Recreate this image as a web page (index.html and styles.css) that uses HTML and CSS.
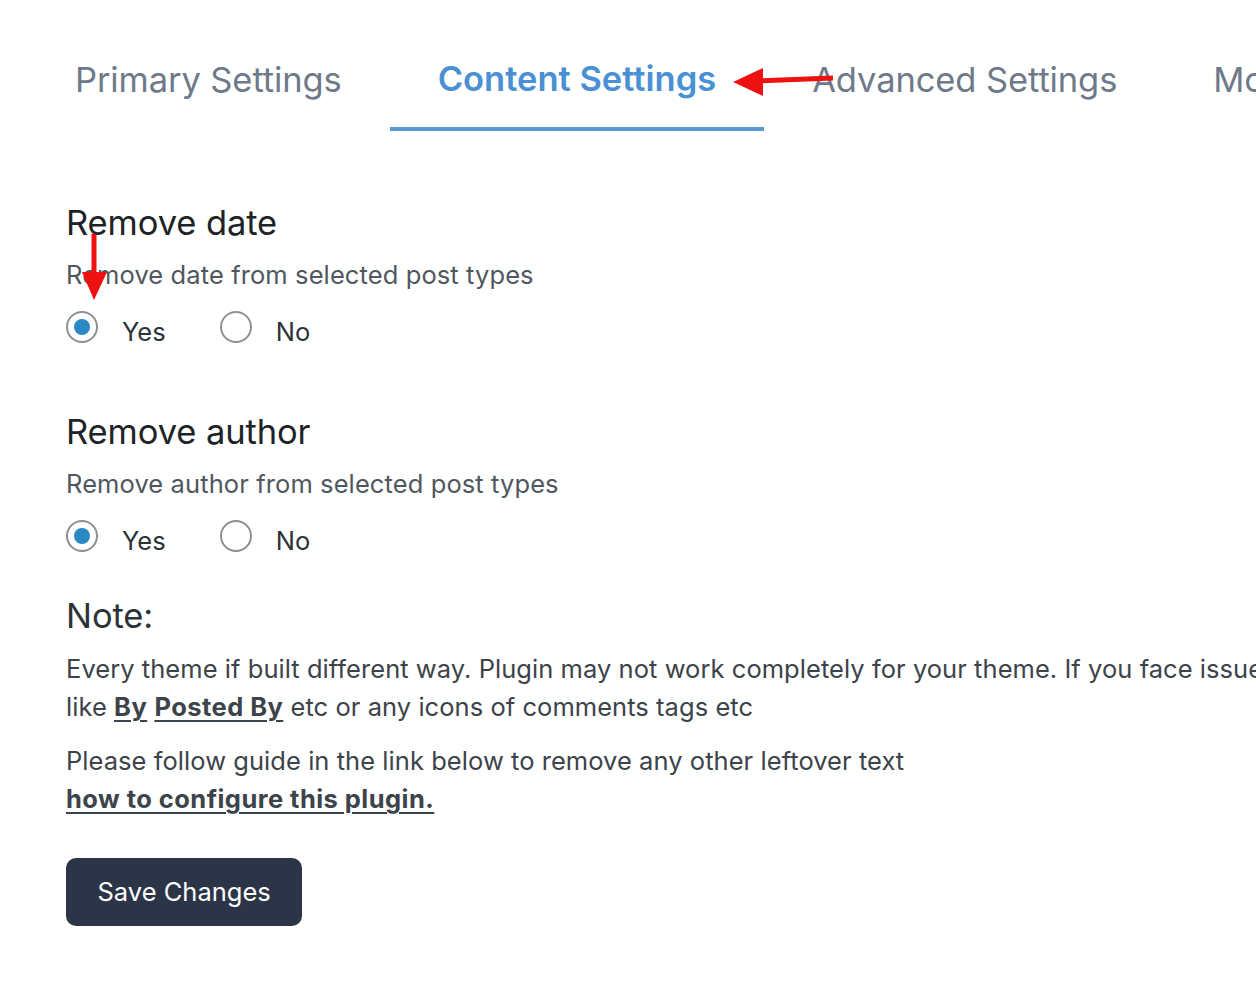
FILE: index.html
```html
<!DOCTYPE html>
<html lang="en">
<head>
<meta charset="utf-8">
<title>Content Settings</title>
<link rel="stylesheet" href="styles.css">
</head>
<body>
<div class="page">
  <nav class="tabs">
    <a class="tab">Primary Settings</a>
    <a class="tab active">Content Settings</a>
    <a class="tab">Advanced Settings</a>
    <a class="tab">More Settings</a>
  </nav>

  <main class="content">
    <section class="field first">
      <h2 class="field-title">Remove date</h2>
      <p class="field-desc">Remove date from selected post types</p>
      <div class="radios">
        <label class="radio"><span class="dot checked"></span><span class="radio-text">Yes</span></label>
        <label class="radio"><span class="dot"></span><span class="radio-text">No</span></label>
      </div>
    </section>

    <section class="field second">
      <h2 class="field-title">Remove author</h2>
      <p class="field-desc">Remove author from selected post types</p>
      <div class="radios">
        <label class="radio"><span class="dot checked"></span><span class="radio-text">Yes</span></label>
        <label class="radio"><span class="dot"></span><span class="radio-text">No</span></label>
      </div>
    </section>

    <section class="note">
      <h2 class="field-title">Note:</h2>
      <p class="note-text">Every theme if built different way. Plugin may not work completely for your theme. If you face issues<br>like <a class="strong-link">By</a> <a class="strong-link">Posted By</a> etc or any icons of comments tags etc</p>
      <p class="note-text second-para">Please follow guide in the link below to remove any other leftover text<br><a class="strong-link">how to configure this plugin.</a></p>
    </section>

    <button class="save-btn">Save Changes</button>
  </main>

  <svg class="annotations" width="1256" height="987" viewBox="0 0 1256 987" aria-hidden="true">
    <line x1="833" y1="78" x2="758" y2="81" stroke="#ee1111" stroke-width="5"/>
    <polygon points="733,82 763,68 763,96" fill="#ee1111"/>
    <line x1="94" y1="234" x2="94" y2="275" stroke="#ee1111" stroke-width="5"/>
    <polygon points="82,272 107,272 94,300" fill="#ee1111"/>
  </svg>
</div>
</body>
</html>
```

FILE: styles.css
```css
html, body {
  margin: 0;
  padding: 0;
  background: #ffffff;
  overflow: hidden;
}

body {
  width: 1256px;
  height: 987px;
  font-family: Inter, "Noto Sans", "Liberation Sans", sans-serif;
}

.page {
  position: relative;
  width: 1256px;
  height: 987px;
  overflow: hidden;
}

.tabs {
  display: flex;
  padding-left: 27px;
  white-space: nowrap;
}

.tab {
  display: block;
  padding: 58px 48px 25px;
  font-size: 34.5px;
  line-height: 44px;
  color: #6e7a89;
  border-bottom: 4px solid transparent;
  letter-spacing: -0.1px;
}

.tab.active {
  color: #4a90d4;
  font-weight: 600;
  border-bottom-color: #5b9bd5;
  letter-spacing: 0;
  line-height: 42px;
  padding-bottom: 27px;
}

.content {
  padding-left: 66px;
  display: flex;
  flex-direction: column;
  align-items: flex-start;
}

.field-title {
  margin: 0;
  font-size: 34.5px;
  line-height: 40px;
  font-weight: 400;
  color: #1d2327;
  letter-spacing: -0.1px;
}

.field.first { margin-top: 72px; }
.field.second { margin-top: 61px; }

.field-desc {
  margin: 13px 0 0;
  font-size: 25.5px;
  line-height: 38px;
  color: #50575e;
  letter-spacing: 0.1px;
}

.radios {
  display: flex;
  gap: 54px;
  margin-top: 19px;
}

.radio {
  display: flex;
  align-items: flex-start;
  gap: 24px;
  font-size: 25.5px;
  line-height: 38px;
  color: #2c3338;
}

.dot {
  box-sizing: border-box;
  width: 32px;
  height: 32px;
  margin-top: -2px;
  border: 2px solid #8c8f94;
  border-radius: 50%;
  background: #ffffff;
  display: flex;
  align-items: center;
  justify-content: center;
}

.dot.checked::after {
  content: "";
  width: 16px;
  height: 16px;
  border-radius: 50%;
  background: #2a88c2;
}

.note { margin-top: 36px; }

.note .field-title { color: #2c3338; }

.note-text {
  margin: 14px 0 0;
  font-size: 25.5px;
  line-height: 38px;
  color: #3c434a;
  white-space: nowrap;
  letter-spacing: 0.05px;
}

.note-text.second-para { margin-top: 16px; }

.strong-link {
  font-weight: 700;
  color: #3c434a;
  text-decoration: underline;
  text-underline-offset: 4px;
  text-decoration-thickness: 2px;
  letter-spacing: 0.45px;
}

.save-btn {
  margin-top: 40px;
  height: 68px;
  padding: 0 31.5px;
  border: none;
  border-radius: 10px;
  background: #2c3447;
  color: #ffffff;
  font-family: Inter, "Noto Sans", "Liberation Sans", sans-serif;
  font-size: 25.5px;
  line-height: 38px;
}

.annotations {
  position: absolute;
  left: 0;
  top: 0;
  pointer-events: none;
}
```
